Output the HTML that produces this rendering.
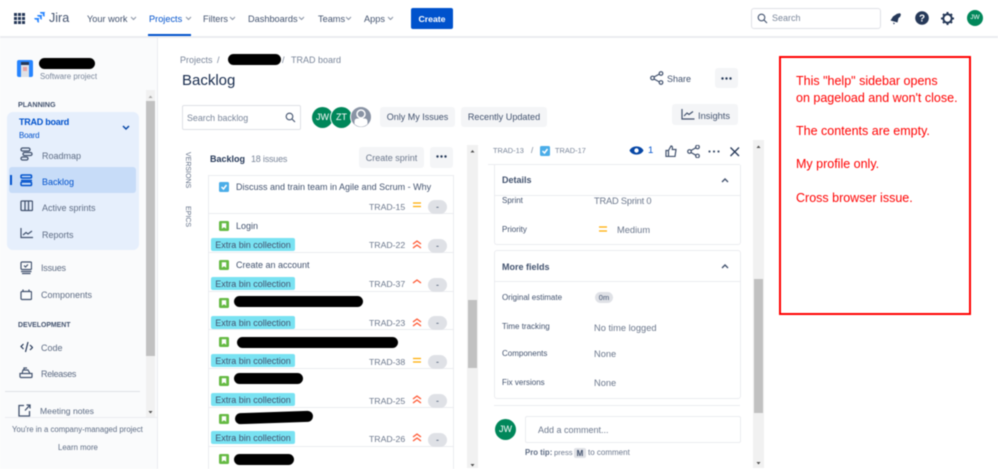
<!DOCTYPE html>
<html><head><meta charset="utf-8"><style>
html,body{margin:0;padding:0;width:998px;height:469px;overflow:hidden;background:#fff}
#p{position:relative;width:998px;height:469px;overflow:hidden;font-family:"Liberation Sans",sans-serif;font-size:9px;color:#42526e;filter:blur(.4px)}
.t{position:absolute;white-space:nowrap;line-height:14px;transform:translateY(1px)}
.b{position:absolute}
svg{position:absolute;overflow:hidden}
.n{font-size:9.2px;color:#42526e}
.s{font-size:9px;color:#5e6c84}
.id{font-size:8.7px;color:#6b778c}
.lb{position:absolute;left:211px;width:84px;height:13px;background:#79e2f2;border-radius:2px;color:#42526e;font-size:9px;line-height:14px;text-align:center;white-space:nowrap}
.pill{position:absolute;left:428px;width:19px;height:14px;border-radius:7px;background:#dfe1e6;text-align:center;font-size:9px;line-height:15px;color:#42526e}
.sep{position:absolute;left:209px;width:244px;height:1px;background:#ebecf0}
.blk{position:absolute;background:#000;border-radius:8px}
.gy{position:absolute;background:#f4f5f7;border-radius:3px}
.f{font-size:8px;color:#42526e}
.v{font-size:9.3px;color:#6b778c}
.r{font-size:12.5px;color:#ff0000;left:796px}
.sb{position:absolute;background:#f1f1f1}
.th{position:absolute;background:#c1c1c1}
.vt{position:absolute;left:180px;writing-mode:vertical-rl;font-size:7px;color:#5e6c84;line-height:14px;white-space:nowrap}
</style></head><body><div id="p">

<!-- Top bar -->
<div class="b" style="left:0;top:36px;width:998px;height:2px;background:#ebecf0"></div>
<svg style="left:14px;top:13px" width="11" height="11" fill="#253858"><rect x="0" y="0" width="3" height="3"/><rect x="4" y="0" width="3" height="3"/><rect x="8" y="0" width="3" height="3"/><rect x="0" y="4" width="3" height="3"/><rect x="4" y="4" width="3" height="3"/><rect x="8" y="4" width="3" height="3"/><rect x="0" y="8" width="3" height="3"/><rect x="4" y="8" width="3" height="3"/><rect x="8" y="8" width="3" height="3"/></svg>
<svg style="left:34px;top:12px" width="12" height="12" viewBox="0 0 12 12" fill="#2684ff"><path d="M11.500 0H6a1.800 1.800 0 0 0 1.800 1.800h1v1A1.800 1.800 0 0 0 10.600 4.600V.5z"/><path d="M8.700 3H3.200a1.800 1.800 0 0 0 1.800 1.800h1v1A1.800 1.800 0 0 0 7.800 7.600V3.500z"/><path d="M5.800 6H0.300a1.800 1.800 0 0 0 1.800 1.800h1v1A1.800 1.800 0 0 0 4.900 10.600V6.500z"/></svg>
<div class="t" style="left:49px;top:10px;font-size:12.500px;color:#42526e">Jira</div>
<div class="t n" style="left:87px;top:11px">Your work</div>
<div class="t n" style="left:149px;top:11px;color:#0052cc">Projects</div>
<div class="t n" style="left:203px;top:11px">Filters</div>
<div class="t n" style="left:248px;top:11px">Dashboards</div>
<div class="t n" style="left:318px;top:11px">Teams</div>
<div class="t n" style="left:364px;top:11px">Apps</div>
<svg style="left:0;top:0" width="400" height="30" fill="none" stroke="#8993a4" stroke-width="1"><path d="M131 17l2.500 2.500 2.500-2.500M186 17l2.500 2.500 2.500-2.500" /><path d="M230 17l2.500 2.500 2.500-2.500M299 17l2.500 2.500 2.500-2.500M346 17l2.500 2.500 2.500-2.500M388 17l2.500 2.500 2.500-2.500"/></svg>
<div class="b" style="left:148px;top:34px;width:43px;height:2px;background:#0052cc"></div>
<div class="b" style="left:411px;top:8px;width:42px;height:21px;background:#0052cc;border-radius:2px;color:#fff;font-size:8.700px;font-weight:bold;text-align:center;line-height:22px">Create</div>

<div class="b" style="left:751px;top:8px;width:128px;height:19px;border:1px solid #dfe1e6;border-radius:3px;background:#fff"></div>
<svg style="left:757px;top:13px" width="11" height="11" fill="none" stroke="#42526e" stroke-width="1.100"><circle cx="4.500" cy="4.500" r="3.300"/><path d="M7 7l3 3"/></svg>
<div class="t" style="left:772px;top:10px;font-size:9px;color:#7a869a">Search</div>
<svg style="left:889px;top:12px" width="13" height="13" viewBox="0 0 13 13" fill="#253858"><path d="M8.500 1.500L11.500 4.500 9.500 6 8.500 10.500 1.500 8.500 4 4.500z"/><circle cx="10.300" cy="2.700" r="1.500"/><path d="M4 10.500l2 .8-1.300 1.200z"/></svg>
<svg style="left:915px;top:11px" width="14" height="14"><circle cx="7" cy="7" r="6.800" fill="#253858"/><text x="7" y="10.500" font-size="10" font-weight="bold" fill="#fff" text-anchor="middle" font-family="Liberation Sans">?</text></svg>
<svg style="left:941px;top:12px" width="13" height="13" viewBox="0 0 13 13"><circle cx="6.500" cy="6.500" r="4.200" fill="none" stroke="#253858" stroke-width="2"/><path d="M6.500 0v2.500M6.500 10.500V13M0 6.500h2.500M10.500 6.500H13M2 2l1.800 1.800M9.200 9.200L11 11M11 2L9.200 3.800M3.800 9.200L2 11" stroke="#253858" stroke-width="2"/></svg>
<div class="b" style="left:967px;top:10px;width:16px;height:16px;border-radius:8px;background:#00875a;color:#fff;font-size:6.500px;text-align:center;line-height:16px">JW</div>

<!-- Sidebar -->
<div class="b" style="left:0;top:38px;width:157px;height:431px;background:#fafbfc;border-right:1px solid #ebecf0"></div>
<svg style="left:17px;top:60px" width="16" height="17" viewBox="0 0 16 17"><rect width="16" height="17" rx="2" fill="#2684ff"/><rect x="4" y="2" width="8" height="15" fill="#dfe1e6"/><rect x="4" y="2" width="8" height="3" fill="#253858"/><rect x="6" y="7" width="4" height="4" fill="#e8a3a3"/></svg>
<div class="blk" style="left:39px;top:58px;width:56px;height:11px;border-radius:6px"></div>
<div class="t" style="left:40px;top:69px;font-size:7.900px;color:#7a869a">Software project</div>
<div class="sb" style="left:146px;top:90px;width:9px;height:327px"></div>
<div class="th" style="left:146px;top:101px;width:9px;height:255px"></div>
<svg style="left:146px;top:90px" width="9" height="327" fill="#7a7a7a"><path d="M2.500 8l2-2.500 2 2.500z" fill="#aaa"/><path d="M2.500 321l2 2.500 2-2.500z" fill="#505050"/></svg>
<div class="t" style="left:18px;top:97px;font-size:7.200px;font-weight:bold;color:#42526e">PLANNING</div>
<div class="b" style="left:7px;top:112px;width:132px;height:138px;background:#e6effc;border-radius:6px"></div>
<div class="t" style="left:19px;top:114px;font-size:9px;font-weight:bold;letter-spacing:-.25px;color:#0052cc">TRAD board</div>
<div class="t" style="left:19px;top:128px;font-size:8px;letter-spacing:-.2px;color:#0052cc">Board</div>
<svg style="left:122px;top:125px" width="9" height="6" fill="none" stroke="#0747a6" stroke-width="1.500"><path d="M1 1l3 3 3-3"/></svg>
<div class="b" style="left:9px;top:167px;width:127px;height:26px;background:#c7dcf8;border-radius:3px"></div>
<div class="b" style="left:10px;top:175px;width:2px;height:10px;background:#0052cc"></div>
<svg style="left:20px;top:147px" width="13" height="14" fill="none" stroke="#42526e" stroke-width="1.300"><rect x="1" y="1" width="9" height="3" rx="1.500"/><rect x="3" y="5.500" width="9" height="3" rx="1.500"/><rect x="1" y="10" width="7" height="3" rx="1.500"/></svg>
<svg style="left:20px;top:174px" width="13" height="13" fill="none" stroke="#0052cc" stroke-width="1.500"><rect x="1" y="1" width="10.500" height="3" rx="1"/><path d="M1 6.500h11"/><rect x="1" y="8" width="10.500" height="3.500" rx="1"/></svg>
<svg style="left:20px;top:200px" width="13" height="13" fill="none" stroke="#42526e" stroke-width="1.300"><rect x="1" y="1" width="11.500" height="9.500" rx="1"/><path d="M5 1v9.500M8.500 1v9.500"/></svg>
<svg style="left:20px;top:228px" width="13" height="12" fill="none" stroke="#42526e" stroke-width="1.200"><path d="M1 0v9.500h12"/><path d="M3 7l3-2.500 2 1.500 4-3"/></svg>
<div class="t s" style="left:42px;top:148px">Roadmap</div>
<div class="t s" style="left:42px;top:174px;color:#0052cc">Backlog</div>
<div class="t s" style="left:42px;top:200px">Active sprints</div>
<div class="t s" style="left:42px;top:227px">Reports</div>
<svg style="left:20px;top:261px" width="12" height="14" fill="none" stroke="#42526e" stroke-width="1.200"><rect x="1" y="1" width="10.500" height="7.500" rx="1"/><path d="M4 4.500l1.500 1.500 2.500-2.500M1 10.500h10.500M2 12.500h8.500"/></svg>
<svg style="left:20px;top:289px" width="12" height="12" fill="none" stroke="#42526e" stroke-width="1.200"><rect x="1" y="2.500" width="10.500" height="8" rx="1"/><path d="M3 0.500v2M9 0.500v2"/></svg>
<div class="t s" style="left:41px;top:260px;letter-spacing:-.2px">Issues</div>
<div class="t s" style="left:41px;top:287px">Components</div>
<div class="t" style="left:18px;top:318px;font-size:6.900px;font-weight:bold;color:#42526e">DEVELOPMENT</div>
<svg style="left:20px;top:341px" width="13" height="12" fill="none" stroke="#253858" stroke-width="1.200"><path d="M3.500 3L1 5.500 3.500 8M10 4l2.500 2.500L10 9M8 1L5.500 11"/></svg>
<svg style="left:19px;top:367px" width="14" height="12" fill="none" stroke="#42526e" stroke-width="1.200"><path d="M1 6.500h12v3a1 1 0 0 1-1 1H2a1 1 0 0 1-1-1zM3 6.500l1-3.500h5l2 3.500M5 3V1h3"/></svg>
<div class="t s" style="left:41px;top:340px">Code</div>
<div class="t s" style="left:41px;top:366px;letter-spacing:-.3px">Releases</div>
<div class="b" style="left:5px;top:391px;width:135px;height:1px;background:#dfe1e6"></div>
<svg style="left:18px;top:404px" width="13" height="13" fill="none" stroke="#42526e" stroke-width="1.300"><path d="M6 1.500H1v10.500h10.500V7M7 6.500L12 1M8.500 1H12v3.500"/></svg>
<div class="t" style="left:40px;top:403px;font-size:8.600px;color:#5e6c84">Meeting notes</div>
<div class="b" style="left:5px;top:417px;width:152px;height:51px;background:#fafbfc;border-top:1px solid #ebecf0"></div>
<div class="t" style="left:12px;top:422px;font-size:7.800px;color:#5e6c84">You're in a company-managed project</div>
<div class="t" style="left:58px;top:440px;font-size:7.800px;color:#5e6c84">Learn more</div>

<!-- Page header -->
<div class="t" style="left:180px;top:52px;font-size:9px;color:#7a869a">Projects</div>
<div class="t" style="left:217px;top:52px;font-size:9px;color:#7a869a">/</div>
<div class="blk" style="left:228px;top:54px;width:53px;height:11px;border-radius:6px"></div>
<div class="t" style="left:282px;top:52px;font-size:9px;color:#7a869a">/</div>
<div class="t" style="left:291px;top:52px;font-size:9px;color:#7a869a">TRAD board</div>
<div class="t" style="left:182px;top:73px;font-size:15px;font-weight:500;color:#172b4d">Backlog</div>
<svg style="left:650px;top:71px" width="14" height="14" fill="none" stroke="#42526e" stroke-width="1.200"><circle cx="2.500" cy="7" r="1.800"/><circle cx="11" cy="2.500" r="1.800"/><circle cx="11" cy="11.500" r="1.800"/><path d="M4 6l5.500-3M4 8l5.500 3"/></svg>
<div class="t" style="left:667px;top:71px;font-size:9px;color:#42526e">Share</div>
<div class="gy" style="left:715px;top:68px;width:23px;height:20px"></div>
<svg style="left:721px;top:77px" width="12" height="3" fill="#253858"><circle cx="1.500" cy="1.500" r="1.200"/><circle cx="5.500" cy="1.500" r="1.200"/><circle cx="9.500" cy="1.500" r="1.200"/></svg>
<div class="b" style="left:182px;top:105px;width:117px;height:23px;border:1px solid #dfe1e6;border-radius:2px"></div>
<div class="t" style="left:187px;top:110px;font-size:8.900px;color:#7a869a">Search backlog</div>
<svg style="left:285px;top:112px" width="11" height="11" fill="none" stroke="#42526e" stroke-width="1.100"><circle cx="4.500" cy="4.500" r="3.300"/><path d="M7 7l3 3"/></svg>
<div class="b" style="left:312px;top:107px;width:21px;height:21px;border-radius:11px;background:#00875a;color:#fff;font-size:9px;text-align:center;line-height:21px">JW</div>
<div class="b" style="left:331px;top:107px;width:21px;height:21px;border-radius:11px;background:#00875a;color:#fff;font-size:9px;text-align:center;line-height:21px;box-shadow:0 0 0 1px #fff">ZT</div>
<svg style="left:350px;top:106px" width="22" height="22"><circle cx="11" cy="11" r="10.500" fill="#8993a4" stroke="#fff"/><circle cx="11" cy="8" r="4" fill="none" stroke="#fff" stroke-width="1.500"/><path d="M4.500 18v-3a3 3 0 0 1 3-2.500h7a3 3 0 0 1 3 2.500v3a9 9 0 0 1-13 0z" fill="#fff"/></svg>
<div class="gy" style="left:380px;top:107px;width:75px;height:20px;text-align:center;line-height:21px;font-size:9px;color:#42526e">Only My Issues</div>
<div class="gy" style="left:461px;top:107px;width:86px;height:20px;text-align:center;line-height:21px;font-size:9.100px;color:#42526e">Recently Updated</div>
<div class="gy" style="left:672px;top:104px;width:66px;height:21px"></div>
<svg style="left:681px;top:109px" width="14" height="11" fill="none" stroke="#42526e" stroke-width="1.200"><path d="M1 0v10h12.500"/><path d="M3 7l3-3 2 1.500 4-3"/></svg>
<div class="t" style="left:698px;top:108px;font-size:9.300px;color:#42526e">Insights</div>

<!-- Versions / epics -->
<div class="vt" style="top:152px">VERSIONS</div>
<div class="vt" style="top:206px">EPICS</div>

<!-- Backlog list -->
<div class="t" style="left:210px;top:151px;font-size:9px;font-weight:bold;color:#253858">Backlog</div>
<div class="t" style="left:251px;top:151px;font-size:9px;letter-spacing:-.2px;color:#7a869a">18 issues</div>
<div class="gy" style="left:359px;top:147px;width:65px;height:21px;text-align:center;line-height:22px;font-size:9px;color:#6b778c">Create sprint</div>
<div class="gy" style="left:430px;top:147px;width:23px;height:21px"></div>
<svg style="left:436px;top:155px" width="12" height="3" fill="#253858"><circle cx="1.500" cy="1.500" r="1.200"/><circle cx="5.500" cy="1.500" r="1.200"/><circle cx="9.500" cy="1.500" r="1.200"/></svg>
<div class="b" style="left:208px;top:175px;width:246px;height:294px;border:1px solid #ebecf0;border-bottom:0;box-sizing:border-box"></div>
<div class="sep" style="top:213px"></div><div class="sep" style="top:252px"></div><div class="sep" style="top:291px"></div><div class="sep" style="top:329px"></div><div class="sep" style="top:368px"></div><div class="sep" style="top:407px"></div><div class="sep" style="top:446px"></div>

<svg style="left:219px;top:182px" width="10" height="10"><rect width="10" height="10" rx="1.500" fill="#4bade8"/><path d="M2.500 5l2 2 3-4" fill="none" stroke="#fff" stroke-width="1.500"/></svg>
<div class="t" style="left:236px;top:179px;font-size:9px;color:#42526e">Discuss and train team in Agile and Scrum - Why</div>
<svg style="left:219px;top:221px" width="10" height="248" fill="#65ba43"><g><rect width="10" height="10" rx="1.500"/><path d="M2.800 2.200h4.400v5.600L5 6.200 2.800 7.800z" fill="#fff"/></g><g transform="translate(0,39)"><rect width="10" height="10" rx="1.500"/><path d="M2.800 2.200h4.400v5.600L5 6.200 2.800 7.800z" fill="#fff"/></g><g transform="translate(0,77)"><rect width="10" height="10" rx="1.500"/><path d="M2.800 2.200h4.400v5.600L5 6.200 2.800 7.800z" fill="#fff"/></g><g transform="translate(0,116)"><rect width="10" height="10" rx="1.500"/><path d="M2.800 2.200h4.400v5.600L5 6.200 2.800 7.800z" fill="#fff"/></g><g transform="translate(0,155)"><rect width="10" height="10" rx="1.500"/><path d="M2.800 2.200h4.400v5.600L5 6.200 2.800 7.800z" fill="#fff"/></g><g transform="translate(0,193)"><rect width="10" height="10" rx="1.500"/><path d="M2.800 2.200h4.400v5.600L5 6.200 2.800 7.800z" fill="#fff"/></g><g transform="translate(0,233)"><rect width="10" height="10" rx="1.500"/><path d="M2.800 2.200h4.400v5.600L5 6.200 2.800 7.800z" fill="#fff"/></g></svg>
<div class="t" style="left:236px;top:218px;font-size:9px;color:#42526e">Login</div>
<div class="t" style="left:236px;top:257px;font-size:9px;color:#42526e">Create an account</div>
<div class="blk" style="left:234px;top:296px;width:129px;height:11px"></div>
<div class="blk" style="left:237px;top:337px;width:161px;height:11px"></div>
<div class="blk" style="left:234px;top:373px;width:69px;height:11px"></div>
<div class="blk" style="left:235px;top:412px;width:78px;height:11px;transform:rotate(-2deg)"></div>
<div class="blk" style="left:234px;top:454px;width:60px;height:11px"></div>

<div class="lb" style="top:238px">Extra bin collection</div>
<div class="lb" style="top:277px">Extra bin collection</div>
<div class="lb" style="top:316px">Extra bin collection</div>
<div class="lb" style="top:354px">Extra bin collection</div>
<div class="lb" style="top:393px">Extra bin collection</div>
<div class="lb" style="top:431px">Extra bin collection</div>

<div class="t id" style="left:369px;top:199px">TRAD-15</div>
<div class="t id" style="left:369px;top:237px">TRAD-22</div>
<div class="t id" style="left:369px;top:276px">TRAD-37</div>
<div class="t id" style="left:369px;top:315px">TRAD-23</div>
<div class="t id" style="left:369px;top:354px">TRAD-38</div>
<div class="t id" style="left:369px;top:393px">TRAD-25</div>
<div class="t id" style="left:369px;top:431px">TRAD-26</div>

<svg style="left:0;top:0" width="998" height="469" fill="none" stroke-width="1.300">
<path d="M413 203h8M413 206.500h8M413 358.500h8M413 362h8" stroke="#ffab00"/>
<path d="M413 244l4-3 4 3M413 248l4-3 4 3M413 283l4-3 4 3M413 322l4-3 4 3M413 326l4-3 4 3M413 399l4-3 4 3M413 403l4-3 4 3M413 437l4-3 4 3M413 441l4-3 4 3" stroke="#ff5630"/>
</svg>
<div class="pill" style="top:200px">-</div>
<div class="pill" style="top:239px">-</div>
<div class="pill" style="top:278px">-</div>
<div class="pill" style="top:316px">-</div>
<div class="pill" style="top:355px">-</div>
<div class="pill" style="top:394px">-</div>
<div class="pill" style="top:433px">-</div>

<div class="sb" style="left:467px;top:145px;width:11px;height:323px"></div>
<div class="th" style="left:468px;top:300px;width:9px;height:68px"></div>
<svg style="left:467px;top:145px" width="11" height="323" fill="#505050"><path d="M3.500 7.500l2-2.500 2 2.500z"/><path d="M3.500 319l2 2.500 2-2.500z"/></svg>

<!-- Detail -->
<div class="t" style="left:493px;top:143px;font-size:7.400px;color:#7a869a">TRAD-13</div>
<div class="t" style="left:531px;top:143px;font-size:8px;color:#7a869a">/</div>
<svg style="left:540px;top:146px" width="10" height="10"><rect width="10" height="10" rx="1.500" fill="#4bade8"/><path d="M2.500 5l2 2 3-4" fill="none" stroke="#fff" stroke-width="1.500"/></svg>
<div class="t" style="left:555px;top:143px;font-size:7.400px;color:#7a869a">TRAD-17</div>
<svg style="left:629px;top:145px" width="15" height="11"><path d="M0.500 5.500C3 0 12 0 14.500 5.500 12 11 3 11 0.500 5.500z" fill="#0747a6"/><circle cx="7.500" cy="5.500" r="2.200" fill="#fff"/></svg>
<div class="t" style="left:648px;top:143px;font-size:9.500px;color:#0052cc">1</div>
<svg style="left:665px;top:145px" width="12" height="12" fill="none" stroke="#42526e" stroke-width="1.200"><path d="M1 5.500h2.500v6H1zM3.500 5.500L6 1c1.500 0 1.500 1 1.300 3.500h3.700l-1 7H3.500"/></svg>
<svg style="left:687px;top:145px" width="13" height="13" fill="none" stroke="#42526e" stroke-width="1.200"><circle cx="2.500" cy="6.500" r="1.800"/><circle cx="10.500" cy="2" r="1.800"/><circle cx="10.500" cy="11" r="1.800"/><path d="M4 5.500l5-2.800M4 7.500l5 2.800"/></svg>
<svg style="left:708px;top:150px" width="12" height="3" fill="#42526e"><circle cx="1.500" cy="1.500" r="1.100"/><circle cx="6" cy="1.500" r="1.100"/><circle cx="10.500" cy="1.500" r="1.100"/></svg>
<svg style="left:730px;top:147px" width="10" height="10" fill="none" stroke="#253858" stroke-width="1.300"><path d="M.5.500l8.500 8.500M9 .5L.5 9"/></svg>
<div class="b" style="left:488px;top:164px;width:252px;height:1px;background:#ebecf0"></div>

<div class="b" style="left:494px;top:165px;width:245px;height:79px;border:1px solid #ebecf0;border-top:0;border-radius:0 0 3px 3px"></div>
<div class="b" style="left:494px;top:195px;width:246px;height:1px;background:#ebecf0"></div>
<div class="t" style="left:502px;top:172px;font-size:9px;font-weight:bold;color:#42526e">Details</div>
<svg style="left:721px;top:178px" width="8" height="5" fill="none" stroke="#42526e" stroke-width="1.400"><path d="M1 4l3-3 3 3"/></svg>
<div class="t f" style="left:502px;top:193px">Sprint</div>
<div class="t v" style="left:594px;top:193px;letter-spacing:-.2px">TRAD Sprint 0</div>
<div class="t f" style="left:502px;top:222px">Priority</div>
<svg style="left:599px;top:226px" width="8" height="7" stroke="#ffab00" stroke-width="1.300"><path d="M0 1h8M0 5h8"/></svg>
<div class="t v" style="left:617px;top:222px">Medium</div>

<div class="b" style="left:494px;top:250px;width:245px;height:147px;border:1px solid #ebecf0;border-radius:3px"></div>
<div class="b" style="left:494px;top:281px;width:246px;height:1px;background:#ebecf0"></div>
<div class="t" style="left:502px;top:259px;font-size:9px;font-weight:bold;color:#42526e">More fields</div>
<svg style="left:721px;top:264px" width="8" height="5" fill="none" stroke="#42526e" stroke-width="1.400"><path d="M1 4l3-3 3 3"/></svg>
<div class="t f" style="left:502px;top:290px">Original estimate</div>
<div class="b" style="left:595px;top:292px;width:18px;height:11px;border-radius:6px;background:#dfe1e6;text-align:center;font-size:7.500px;line-height:12px">0m</div>
<div class="t f" style="left:502px;top:319px">Time tracking</div>
<div class="t v" style="left:594px;top:320px">No time logged</div>
<div class="t f" style="left:502px;top:346px">Components</div>
<div class="t v" style="left:594px;top:346px">None</div>
<div class="t f" style="left:502px;top:375px">Fix versions</div>
<div class="t v" style="left:594px;top:375px">None</div>
<div class="b" style="left:494px;top:405px;width:246px;height:1px;background:#ebecf0"></div>
<div class="b" style="left:495px;top:419px;width:21px;height:21px;border-radius:11px;background:#00875a;color:#fff;font-size:9px;text-align:center;line-height:21px">JW</div>
<div class="b" style="left:525px;top:416px;width:214px;height:25px;border:1px solid #ebecf0;border-radius:2px"></div>
<div class="t" style="left:538px;top:422px;font-size:9px;color:#6b778c">Add a comment...</div>
<div class="t" style="left:525px;top:445px;font-size:7.800px;font-weight:bold;color:#5e6c84">Pro tip:</div>
<div class="t" style="left:554px;top:445px;font-size:7.600px;color:#6b778c">press</div>
<div class="b" style="left:574px;top:448px;width:12px;height:10px;background:#dfe1e6;border-radius:2px;text-align:center;font-size:8px;font-weight:bold;line-height:11px;color:#42526e">M</div>
<div class="t" style="left:588px;top:445px;font-size:8px;color:#6b778c">to comment</div>

<div class="sb" style="left:753px;top:140px;width:11px;height:328px"></div>
<div class="th" style="left:754px;top:279px;width:9px;height:134px"></div>
<svg style="left:753px;top:140px" width="11" height="328" fill="#505050"><path d="M3.500 8l2-2.500 2 2.500z"/><path d="M3.500 322l2 2.500 2-2.500z"/></svg>

<!-- Red annotation -->
<div class="b" style="left:779px;top:56px;width:192px;height:259px;box-sizing:border-box;border:2px solid #ff0000"></div>
<div class="t r" style="top:73px">This "help" sidebar opens</div>
<div class="t r" style="top:90px">on pageload and won't close.</div>
<div class="t r" style="top:123px">The contents are empty.</div>
<div class="t r" style="top:156px">My profile only.</div>
<div class="t r" style="top:190px">Cross browser issue.</div>
</div></body></html>
